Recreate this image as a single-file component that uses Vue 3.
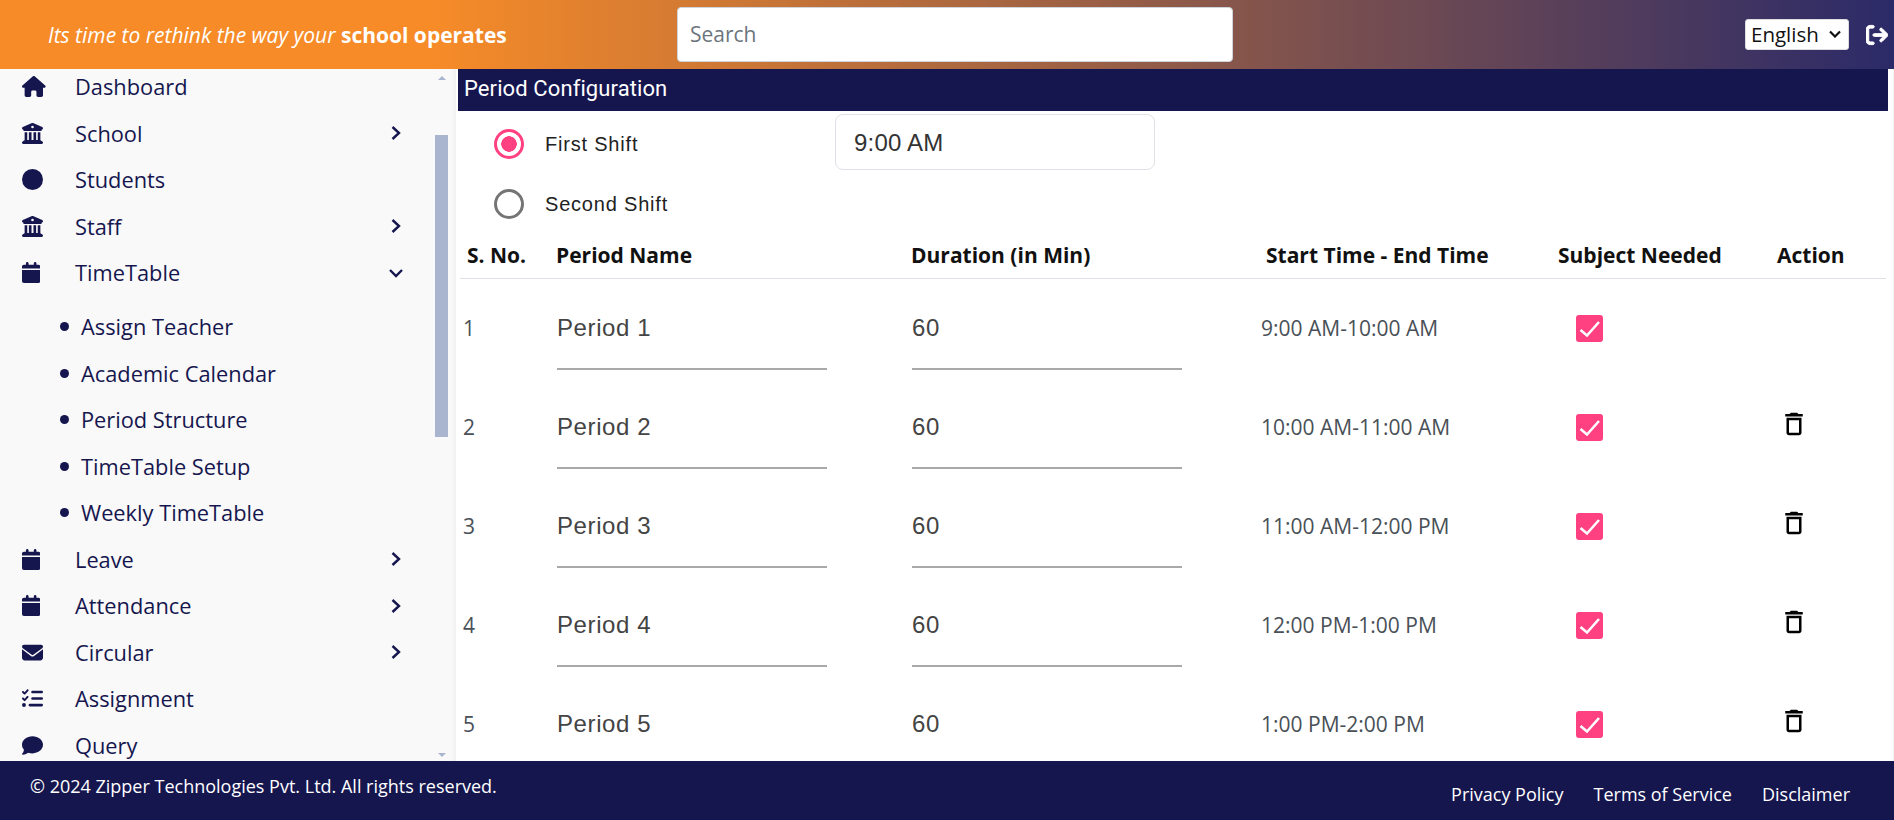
<script setup>
const icons = {
  home: { vb: '0 0 576 512', d: 'M575.8 255.5c0 18-15 32.1-32 32.1h-32l.7 160.2c0 2.7-.2 5.4-.5 8.1V472c0 22.1-17.9 40-40 40H456c-1.1 0-2.2 0-3.3-.1c-1.4 .1-2.8 .1-4.2 .1H416 392c-22.1 0-40-17.9-40-40V448 384c0-17.7-14.3-32-32-32H256c-17.7 0-32 14.3-32 32v64 24c0 22.1-17.9 40-40 40H160 128.1c-1.5 0-3-.1-4.5-.2c-1.2 .1-2.4 .2-3.6 .2H104c-22.1 0-40-17.9-40-40V360c0-.9 0-1.9 .1-2.8V287.6H32c-18 0-32-14-32-32.1c0-9 3-17 10-24L266.4 8c7-7 15-8 22-8s15 2 21 7L564.8 231.5c8 7 12 15 11 24z' },
  bank: { vb: '0 0 512 512', d: 'M243.4 2.6l-224 96c-14 6-21.8 21-18.7 35.8S16.8 160 32 160v8c0 13.3 10.7 24 24 24H456c13.3 0 24-10.7 24-24v-8c15.2 0 28.3-10.7 31.3-25.6s-4.8-29.9-18.7-35.8l-224-96c-8-3.4-17.2-3.4-25.2 0zM128 224H64V420.3c-.6 .3-1.2 .7-1.8 1.1l-48 32c-11.7 7.8-17 22.4-12.9 35.9S17.9 512 32 512H480c14.1 0 26.5-9.2 30.6-22.7s-1.1-28.1-12.9-35.9l-48-32c-.6-.4-1.2-.7-1.8-1.1V224H384V416H344V224H280V416H232V224H168V416H128V224zM256 64a32 32 0 1 1 0 64 32 32 0 1 1 0-64z' },
  circle: { vb: '0 0 512 512', d: 'M256 0a256 256 0 1 0 0 512A256 256 0 1 0 256 0z' },
  calendar: { vb: '0 0 448 512', d: 'M96 32V64H48C21.5 64 0 85.5 0 112v48H448V112c0-26.5-21.5-48-48-48H352V32c0-17.7-14.3-32-32-32s-32 14.3-32 32V64H160V32c0-17.7-14.3-32-32-32S96 14.3 96 32zM448 192H0V464c0 26.5 21.5 48 48 48H400c26.5 0 48-21.5 48-48V192z' },
  envelope: { vb: '0 0 512 512', d: 'M48 64C21.5 64 0 85.5 0 112c0 15.1 7.1 29.3 19.2 38.4L236.8 313.6c11.4 8.5 27 8.5 38.4 0L492.8 150.4c12.1-9.1 19.2-23.3 19.2-38.4c0-26.5-21.5-48-48-48H48zM0 176V384c0 35.3 28.7 64 64 64H448c35.3 0 64-28.7 64-64V176L294.4 339.2c-22.8 17.1-54 17.1-76.8 0L0 176z' },
  list: { vb: '0 0 512 512', d: 'M152.1 38.2c9.9 8.9 10.7 24 1.8 33.9l-72 80c-4.4 4.9-10.6 7.8-17.2 7.9s-12.9-2.4-17.6-7L7 113C-2.3 103.6-2.3 88.4 7 79s24.6-9.4 33.9 0l22.1 22.1 55.1-61.2c8.9-9.9 24-10.7 33.9-1.8zm0 160c9.9 8.9 10.7 24 1.8 33.9l-72 80c-4.4 4.9-10.6 7.8-17.2 7.9s-12.9-2.4-17.6-7L7 273c-9.4-9.4-9.4-24.6 0-33.9s24.6-9.4 33.9 0l22.1 22.1 55.1-61.2c8.9-9.9 24-10.7 33.9-1.8zM224 96c0-17.7 14.3-32 32-32H480c17.7 0 32 14.3 32 32s-14.3 32-32 32H256c-17.7 0-32-14.3-32-32zm0 160c0-17.7 14.3-32 32-32H480c17.7 0 32 14.3 32 32s-14.3 32-32 32H256c-17.7 0-32-14.3-32-32zM160 416c0-17.7 14.3-32 32-32H480c17.7 0 32 14.3 32 32s-14.3 32-32 32H192c-17.7 0-32-14.3-32-32zM48 368a48 48 0 1 1 0 96 48 48 0 1 1 0-96z' },
  comment: { vb: '0 0 512 512', d: 'M512 240c0 114.9-114.6 208-256 208c-37.1 0-72.3-6.4-104.1-17.9c-11.9 8.7-31.3 20.6-54.3 30.6C73.6 471.1 44.7 480 16 480c-6.5 0-12.3-3.9-14.8-9.9c-2.5-6-1.1-12.8 3.4-17.4c.3-.3 .7-.7 1.3-1.4c1.1-1.2 2.8-3.1 4.9-5.7c4.1-5 9.6-12.4 15.2-21.6c10-16.6 19.5-38.4 21.4-62.9C17.7 326.8 0 285.1 0 240C0 125.1 114.6 32 256 32s256 93.1 256 208z' }
}

const menu = [
  { label: 'Dashboard', icon: 'home' },
  { label: 'School', icon: 'bank', arrow: 'right' },
  { label: 'Students', icon: 'circle' },
  { label: 'Staff', icon: 'bank', arrow: 'right' },
  { label: 'TimeTable', icon: 'calendar', arrow: 'down', children: ['Assign Teacher', 'Academic Calendar', 'Period Structure', 'TimeTable Setup', 'Weekly TimeTable'] },
  { label: 'Leave', icon: 'calendar', arrow: 'right' },
  { label: 'Attendance', icon: 'calendar', arrow: 'right' },
  { label: 'Circular', icon: 'envelope', arrow: 'right' },
  { label: 'Assignment', icon: 'list' },
  { label: 'Query', icon: 'comment' }
]

const periods = [
  { n: 1, name: 'Period 1', mins: 60, time: '9:00 AM-10:00 AM', del: false },
  { n: 2, name: 'Period 2', mins: 60, time: '10:00 AM-11:00 AM', del: true },
  { n: 3, name: 'Period 3', mins: 60, time: '11:00 AM-12:00 PM', del: true },
  { n: 4, name: 'Period 4', mins: 60, time: '12:00 PM-1:00 PM', del: true },
  { n: 5, name: 'Period 5', mins: 60, time: '1:00 PM-2:00 PM', del: true }
]
</script>

<template>
  <div class="page">
    <header class="topbar">
      <p class="tagline">Its time to rethink the way your <b>school operates</b></p>
      <input class="search" type="text" placeholder="Search" />
      <div class="top-right">
        <div class="lang">
          <select class="lang-select"><option>English</option></select>
          <svg class="lang-arrow" viewBox="0 0 12 8"><path d="M1 1.5 6 6.5 11 1.5" fill="none" stroke="#111" stroke-width="2.2" /></svg>
        </div>
        <svg class="logout" viewBox="0 0 512 512"><path fill="#fff" stroke="#fff" stroke-width="22" d="M502.6 278.6c12.5-12.5 12.5-32.8 0-45.3l-128-128c-12.5-12.5-32.8-12.5-45.3 0s-12.5 32.8 0 45.3L402.7 224 192 224c-17.7 0-32 14.3-32 32s14.3 32 32 32l210.7 0-73.4 73.4c-12.5 12.5-12.5 32.8 0 45.3s32.8 12.5 45.3 0l128-128zM160 96c17.7 0 32-14.3 32-32s-14.3-32-32-32L96 32C43 32 0 75 0 128L0 384c0 53 43 96 96 96l64 0c17.7 0 32-14.3 32-32s-14.3-32-32-32l-64 0c-17.7 0-32-14.3-32-32l0-256c0-17.7 14.3-32 32-32l64 0z" /></svg>
      </div>
    </header>

    <div class="main">
      <aside class="sidebar">
        <ul class="menu">
          <li v-for="item in menu" :key="item.label">
            <div class="menu-row">
              <span class="menu-icon"><svg :viewBox="icons[item.icon].vb" class="fa"><path :d="icons[item.icon].d" /></svg></span>
              <span class="menu-label">{{ item.label }}</span>
              <svg v-if="item.arrow === 'right'" class="chev" viewBox="0 0 14 14"><path d="M3.5 1 10 7 3.5 13" /></svg>
              <svg v-if="item.arrow === 'down'" class="chev" viewBox="0 0 14 14"><path d="M1 4 7 10 13 4" /></svg>
            </div>
            <ul v-if="item.children" class="submenu">
              <li v-for="c in item.children" :key="c" class="sub-row"><span class="dot"></span>{{ c }}</li>
            </ul>
          </li>
        </ul>
        <div class="scroll-track">
          <span class="scroll-arrow up"></span>
          <span class="scroll-thumb"></span>
          <span class="scroll-arrow down"></span>
        </div>
      </aside>

      <section class="content">
        <h1 class="title">Period Configuration</h1>
        <div class="shifts">
          <div class="shift-row">
            <span class="radio on"></span>
            <span class="shift-label">First Shift</span>
            <input class="time" type="text" value="9:00 AM" />
          </div>
          <div class="shift-row">
            <span class="radio"></span>
            <span class="shift-label">Second Shift</span>
          </div>
        </div>

        <div class="thead">
          <span class="th-sno">S. No.</span>
          <span>Period Name</span>
          <span>Duration (in Min)</span>
          <span class="th-time">Start Time - End Time</span>
          <span>Subject Needed</span>
          <span>Action</span>
        </div>
        <div class="tbody">
          <div v-for="p in periods" :key="p.n" class="tr">
            <span class="td-sno">{{ p.n }}</span>
            <div class="field">{{ p.name }}</div>
            <div class="field">{{ p.mins }}</div>
            <span class="td-time">{{ p.time }}</span>
            <span class="check">
              <svg viewBox="0 0 27 27"><path d="M4.5 15 11 20.5 23 7" fill="none" stroke="#fff" stroke-width="2.6" /></svg>
            </span>
            <span class="td-action">
              <svg v-if="p.del" class="trash" viewBox="0 0 24 24"><path d="M6 19c0 1.1.9 2 2 2h8c1.1 0 2-.9 2-2V7H6v12zM8 9h8v10H8V9zm7.5-5l-1-1h-5l-1 1H5v2h14V4z" /></svg>
            </span>
          </div>
        </div>
      </section>
    </div>

    <footer class="footer">
      <p class="copy">© 2024 Zipper Technologies Pvt. Ltd. All rights reserved.</p>
      <nav class="links">
        <a>Privacy Policy</a>
        <a>Terms of Service</a>
        <a>Disclaimer</a>
      </nav>
    </footer>
  </div>
</template>

<style>
html, body { margin: 0; padding: 0; overflow: hidden; background: #fff; }
</style>

<style scoped>
.page {
  width: 1894px;
  height: 820px;
  display: flex;
  flex-direction: column;
  overflow: hidden;
  font-family: "Open Sans", "Noto Sans", sans-serif;
}

.topbar {
  height: 69px;
  flex: none;
  display: flex;
  align-items: center;
  padding-left: 48px;
  padding-right: 6px;
  box-sizing: border-box;
  background: linear-gradient(90deg, #f68b28 23%, #2b2a68 100%);
  color: #fff;
}
.tagline {
  margin: 0;
  width: 629px;
  flex: none;
  font-size: 21px;
  font-style: italic;
}
.tagline b { font-style: normal; font-weight: 700; }
.search {
  width: 556px;
  height: 55px;
  flex: none;
  box-sizing: border-box;
  border: 1px solid #ced4da;
  border-radius: 4px;
  background: #fff;
  padding: 0 12px;
  font: 21px "Open Sans", sans-serif;
  outline: none;
  margin-top: -1px;
}
.search::placeholder { color: #6c757d; opacity: 1; }
.top-right {
  margin-left: auto;
  display: flex;
  align-items: center;
  gap: 17px;
}
.lang { position: relative; display: flex; }
.lang-select {
  width: 104px;
  height: 31px;
  appearance: none;
  box-sizing: border-box;
  border: 1px solid #ddd;
  border-radius: 3px;
  background: #fff;
  padding: 0 0 2px 5px;
  font: 20.5px "Open Sans", sans-serif;
  color: #111;
}
.lang-arrow { position: absolute; right: 8px; top: 11px; width: 12px; height: 8px; }
.logout { width: 22px; height: 22px; }

.main { flex: 1; min-height: 0; display: flex; }

.sidebar {
  width: 456px;
  flex: none;
  position: relative;
  overflow: hidden;
  background: #f9f9f9;
  box-shadow: inset -6px 0 5px -5px #ecebf0;
}
.menu, .submenu { list-style: none; margin: 0; padding: 0; }
.menu { margin-top: -5.5px; color: #16164f; }
.menu-row {
  height: 46.5px;
  display: flex;
  align-items: center;
  padding-left: 22px;
  padding-right: 52px;
  font-size: 21.8px;
  font-weight: 500;
}
.menu-icon { width: 53px; flex: none; display: flex; align-items: center; }
.fa { height: 21px; width: auto; fill: #16164f; }
.menu-label { flex: 1; }
.chev { width: 14px; height: 14px; fill: none; stroke: #16164f; stroke-width: 2.4; margin-right: 1px; }
.submenu { padding: 7.5px 0 0; }
.sub-row {
  height: 46.5px;
  display: flex;
  align-items: center;
  padding-left: 60px;
  gap: 12px;
  font-size: 21.8px;
  font-weight: 500;
  color: #16164f;
}
.dot { width: 9px; height: 9px; border-radius: 50%; background: #16164f; }

.scroll-track {
  position: absolute;
  top: 0;
  bottom: 0;
  right: 8px;
  width: 13px;
}
.scroll-thumb {
  position: absolute;
  left: 0;
  top: 66px;
  width: 13px;
  height: 302px;
  background: #a9b5cf;
}
.scroll-arrow { position: absolute; left: 3px; border: 4px solid transparent; }
.scroll-arrow.up { top: 3px; border-bottom-color: #a9b5cf; }
.scroll-arrow.down { bottom: 0; border-top-color: #a9b5cf; }

.content {
  flex: 1;
  min-width: 0;
  padding-left: 2px;
  padding-right: 6px;
  background: #fff;
  box-shadow: inset -1px 0 0 #f4f4f4;
}
.title {
  margin: 0;
  height: 42px;
  display: flex;
  align-items: center;
  padding-left: 6px;
  padding-bottom: 4px;
  box-sizing: border-box;
  background: #16164f;
  color: #fff;
  font: 400 22px Roboto, sans-serif;
  letter-spacing: .1px;
}

.shifts { height: 132px; box-sizing: border-box; padding-top: 3px; }
.shift-row { display: flex; align-items: center; height: 60px; padding-left: 36px; }
.radio {
  width: 30px;
  height: 30px;
  flex: none;
  box-sizing: border-box;
  border: 3px solid #757575;
  border-radius: 50%;
  margin-right: 21px;
  background: #fff;
}
.radio.on {
  border-color: #ff4081;
  background: radial-gradient(circle, #ff4081 0 7.5px, #fff 8px);
}
.shift-label {
  width: 290px;
  font: 400 20px "Liberation Sans", Arial, sans-serif;
  letter-spacing: .8px;
  color: #222;
}
.time {
  align-self: flex-start;
  width: 320px;
  height: 56px;
  box-sizing: border-box;
  border: 1px solid #dee2e6;
  border-radius: 8px;
  padding: 2px 18px 0;
  font: 400 24px "Liberation Sans", Arial, sans-serif;
  letter-spacing: .2px;
  color: #333;
  outline: none;
}

.thead, .tr {
  display: grid;
  grid-template-columns: 96px 355px 350px 297px 219px 1fr;
  align-items: center;
}
.thead {
  height: 36px;
  box-sizing: border-box;
  margin-left: 2px;
  margin-right: 2px;
  border-bottom: 1px solid #dee2e6;
  font-size: 21px;
  line-height: 24px;
  font-weight: 700;
  color: #111;
  align-items: start;
}
.th-sno { padding-left: 7px; }
.th-time { padding-left: 5px; }

.tr {
  height: 99px;
  margin-left: 2px;
  color: #495057;
}
.td-sno { padding-left: 3px; padding-bottom: 2px; font-size: 21px; color: #495057; }
.field {
  width: 270px;
  height: 80px;
  box-sizing: border-box;
  border-bottom: 2px solid #a9a9a9;
  margin-left: 1px;
  padding-top: 24px;
  font: 400 24px "Liberation Sans", Arial, sans-serif;
  letter-spacing: .6px;
  color: #444;
  align-self: start;
  margin-top: 11px;
}
.td-time { font-size: 21px; padding-bottom: 2px; color: #495057; }
.check {
  width: 27px;
  height: 27px;
  display: block;
  border-radius: 3px;
  background: #ff4081;
  margin-left: 18px;
}
.check svg { display: block; width: 27px; height: 27px; }
.td-action { display: flex; padding-left: 2px; }
.trash { width: 30px; height: 30px; fill: #000; margin-top: -8px; }

.footer {
  height: 59px;
  flex: none;
  background: #16164f;
  color: #fff;
  font-size: 18px;
  display: flex;
  justify-content: space-between;
  padding: 0 44px 0 30px;
}
.copy { margin: 13px 0 0; }
.links { display: flex; gap: 30px; padding-top: 21px; }
</style>
